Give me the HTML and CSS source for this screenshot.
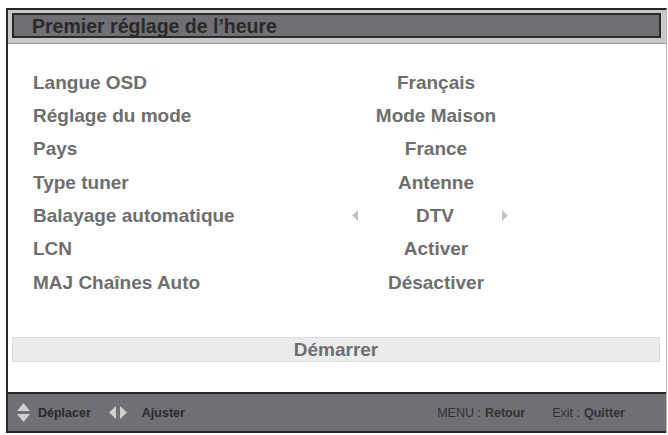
FILE: index.html
```html
<!DOCTYPE html>
<html lang="fr">
<head>
  <meta charset="UTF-8">
  <title>Premier réglage de l’heure</title>
  <link rel="stylesheet" href="styles.css">
</head>
<body>

  <div class="ecran">
    <div class="bandeau">
      <div class="titre">Premier réglage de l’heure</div>
    </div>

    <div class="contenu">
      <div class="reglages">
        <div class="libelle">Langue OSD</div>
        <div class="valeur">Français</div>

        <div class="libelle">Réglage du mode</div>
        <div class="valeur">Mode Maison</div>

        <div class="libelle">Pays</div>
        <div class="valeur">France</div>

        <div class="libelle">Type tuner</div>
        <div class="valeur">Antenne</div>

        <div class="libelle">Balayage automatique</div>
        <div class="valeur choix">
          <svg class="fleche gauche" width="6" height="11" viewBox="0 0 6 11">
            <polygon points="6,0 6,11 0,5.5" />
          </svg>
          <span>DTV</span>
          <svg class="fleche droite" width="6" height="11" viewBox="0 0 6 11">
            <polygon points="0,0 6,5.5 0,11" />
          </svg>
        </div>

        <div class="libelle">LCN</div>
        <div class="valeur">Activer</div>

        <div class="libelle">MAJ Chaînes Auto</div>
        <div class="valeur">Désactiver</div>
      </div>

      <div class="demarrer">Démarrer</div>
    </div>

    <div class="pied">
      <div class="aide">
        <svg class="icone" width="13" height="19" viewBox="0 0 13 19">
          <polygon points="6.5,0 13,8 0,8" />
          <polygon points="0,11 13,11 6.5,19" />
        </svg>
        <b>Déplacer</b>
      </div>
      <div class="aide ajuster">
        <svg class="icone" width="20" height="13" viewBox="0 0 20 13">
          <polygon points="8,0 8,13 1,6.5" />
          <polygon points="12,0 19,6.5 12,13" />
        </svg>
        <b>Ajuster</b>
      </div>
      <div class="aide touche">MENU : <b>Retour</b></div>
      <div class="aide touche">Exit : <b>Quitter</b></div>
    </div>
  </div>

</body>
</html>
```

FILE: styles.css
```css
:root {
  --cadre: #262626;
  --bande: #c9c9c9;
  --gris: #6f6f74;
  --texte: #6e6e6e;
  --fonce: #2a2a2a;
}

body {
  margin: 0;
  background: #ffffff;
  font-family: "Liberation Sans", Arial, sans-serif;
}

.ecran {
  margin: 8px 1px 2px 6px;
  height: 425px;
  border-left: 2px solid var(--cadre);
  border-top: 2px solid var(--cadre);
  border-right: 1px solid #bdbdbd;
  display: flex;
  flex-direction: column;
  box-sizing: border-box;
}

.bandeau {
  background: var(--bande);
  padding: 3px 5px 5px 4px;
  border-bottom: 1px solid #9a9a9a;
}

.titre {
  background: var(--gris);
  border: 2px solid var(--fonce);
  height: 21px;
  line-height: 22px;
  padding-left: 18px;
  font-size: 19.5px;
  font-weight: bold;
  color: var(--fonce);
}

.contenu {
  flex: 1;
  padding: 22px 6px 0 4px;
  background: #ffffff;
}

.reglages {
  display: grid;
  grid-template-columns: 322px 162px;
  grid-auto-rows: 33.33px;
  align-items: center;
  padding-left: 21px;
  font-size: 19px;
  font-weight: bold;
  color: var(--texte);
}

.valeur {
  text-align: center;
}

.choix {
  display: flex;
  justify-content: center;
  align-items: center;
}

.fleche {
  fill: #c2c2c2;
}

.fleche.gauche {
  margin-right: 58px;
  margin-left: -12px;
}

.fleche.droite {
  margin-left: 48px;
}

.demarrer {
  margin-top: 38px;
  height: 23px;
  line-height: 24px;
  background: #ececec;
  border: 1px solid #dedede;
  text-align: center;
  font-size: 19px;
  font-weight: bold;
  color: var(--texte);
}

.pied {
  height: 41px;
  box-sizing: border-box;
  background: var(--gris);
  border-top: 2px solid var(--cadre);
  border-bottom: 2px solid var(--cadre);
  display: flex;
  align-items: center;
  padding-left: 9px;
  padding-right: 41px;
  font-size: 12.5px;
  color: var(--fonce);
}

.aide {
  display: flex;
  align-items: center;
  gap: 8px;
  margin-right: 17px;
}

.aide.ajuster {
  gap: 14px;
}

.aide.touche {
  gap: 4px;
  margin-right: 0;
  color: #333333;
}

.aide.touche + .aide.touche {
  margin-left: 27px;
}

.aide:nth-child(3) {
  margin-left: auto;
}

.icone {
  fill: #d0d0d0;
}
```
